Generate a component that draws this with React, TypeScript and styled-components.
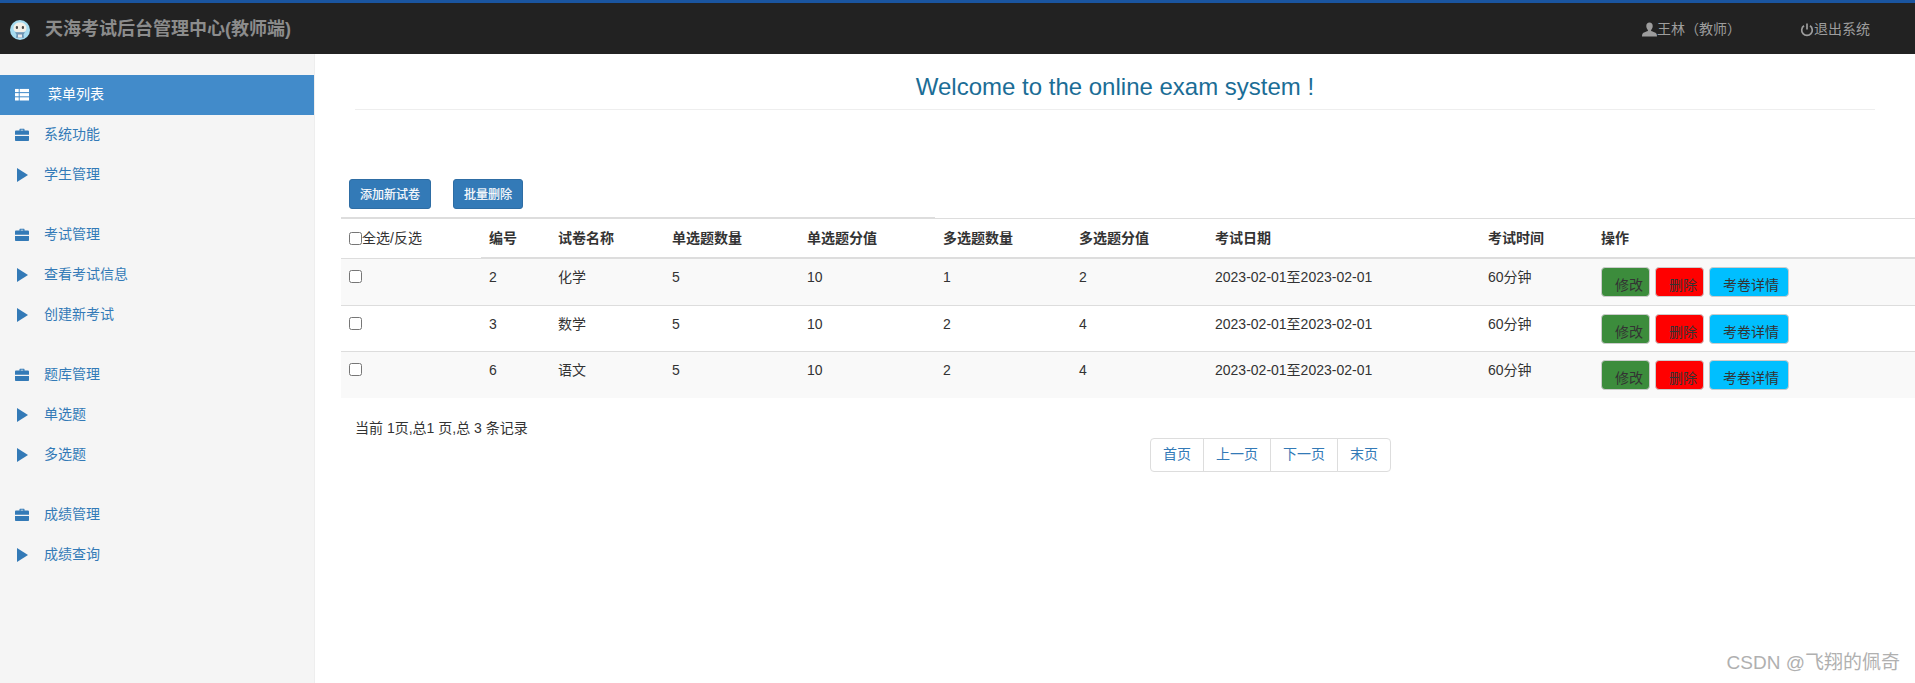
import React from "react";
import styled, { createGlobalStyle } from "styled-components";

const GlobalStyle = createGlobalStyle`
  html, body {
    margin: 0;
    padding: 0;
    height: 100%;
    overflow: hidden;
    background: #fff;
  }
  body {
    font-family: "Liberation Sans", "Noto Sans CJK SC", sans-serif;
    font-size: 14px;
    line-height: 1.42857;
    color: #333;
  }
  * {
    box-sizing: border-box;
  }
`;

const Page = styled.div`
  display: flex;
  flex-direction: column;
  height: 100vh;
  position: relative;
`;

const TopBar = styled.header`
  flex: none;
  height: 54px;
  display: flex;
  align-items: center;
  background: #222;
  border-top: 3px solid #1a55a0;
  padding: 3px 0 0 10px;
  color: #9d9d9d;
`;

const Brand = styled.div`
  flex: 1;
  display: flex;
  align-items: center;
  gap: 15px;
  font-size: 18px;
  font-weight: bold;
  color: #8c8c8c;
`;

const NavLink = styled.div<{ $width: number }>`
  width: ${(p) => p.$width}px;
  display: flex;
  align-items: center;
  color: #9d9d9d;
  font-size: 14px;
`;

const Layout = styled.div`
  flex: 1;
  display: flex;
  min-height: 0;
`;

const Sidebar = styled.aside`
  flex: none;
  width: 315px;
  background: #f5f5f5;
  border-right: 1px solid #eee;
  padding-top: 21px;
`;

const MenuGroup = styled.ul`
  list-style: none;
  margin: 0 0 20px;
  padding: 0;
`;

const MenuItem = styled.li<{ $active?: boolean }>`
  height: 40px;
  display: flex;
  align-items: center;
  padding-left: 15px;
  gap: ${(p) => (p.$active ? 20 : 16)}px;
  background: ${(p) => (p.$active ? "#428bca" : "transparent")};
  color: ${(p) => (p.$active ? "#fff" : "#337ab7")};
`;

const IconSlot = styled.span`
  flex: none;
  width: 14px;
  height: 14px;
  display: flex;
`;

const MenuText = styled.span`
  margin-left: -1px;
`;

const Main = styled.main`
  flex: 1;
  min-width: 0;
`;

const WelcomeTitle = styled.h2`
  margin: 0 40px;
  height: 56px;
  padding-top: 16px;
  border-bottom: 1px solid #eee;
  text-align: center;
  font-size: 24px;
  font-weight: normal;
  line-height: 34px;
  color: #1b6d96;
`;

const Toolbar = styled.div`
  display: flex;
  gap: 22px;
  margin: 69px 0 8px 34px;
`;

const PrimaryButton = styled.button`
  height: 30px;
  padding: 0 10px 2px;
  border: 1px solid #2e6da4;
  border-radius: 3px;
  background: #337ab7;
  color: #fff;
  font: 12px "Liberation Sans", "Noto Sans CJK SC", sans-serif;
  -webkit-text-stroke: 0.2px #fff;
`;

const ExamTable = styled.table`
  width: 1574px;
  margin-left: 26px;
  border-collapse: collapse;
  table-layout: fixed;
`;

const HeadCell = styled.th<{ $heavyTop?: boolean; $thinBottom?: boolean }>`
  height: 40px;
  padding: 2px 8px 0;
  text-align: left;
  font-weight: bold;
  border-top: ${(p) => (p.$heavyTop ? 2 : 1)}px solid #ddd;
  border-bottom: ${(p) => (p.$thinBottom ? 1 : 2)}px solid #ddd;
`;

const BodyRow = styled.tr<{ $striped: boolean }>`
  background: ${(p) => (p.$striped ? "#f9f9f9" : "#fff")};
  &:first-child td {
    padding-bottom: 8px;
  }
`;

const Cell = styled.td`
  height: 46px;
  padding: 8px 8px 7px;
  vertical-align: top;
  line-height: 20px;
  border-top: 1px solid #ddd;
`;

const Check = styled.input.attrs({ type: "checkbox" })`
  width: 13px;
  height: 13px;
  margin: 3px 0 0;
  vertical-align: top;
`;

const SelectAll = styled.label`
  display: flex;
  align-items: center;
  font-weight: normal;
  ${Check} {
    margin: 0 0 2px;
  }
`;

const Actions = styled.div`
  display: flex;
  gap: 5px;
`;

const ActionButton = styled.button<{ $bg: string; $width: number }>`
  width: ${(p) => p.$width}px;
  height: 30px;
  padding: 3px 0 0 13px;
  text-align: left;
  border: 1px solid #ccc;
  border-radius: 4px;
  background: ${(p) => p.$bg};
  color: #333;
  font: 14px "Liberation Sans", "Noto Sans CJK SC", sans-serif;
`;

const RecordInfo = styled.div`
  margin: 20px 0 0 40px;
  line-height: 20px;
`;

const PagerRow = styled.nav`
  display: flex;
  margin: 0 0 0 835px;
`;

const PagerLink = styled.a`
  height: 34px;
  padding: 6px 12px;
  margin-left: -1px;
  border: 1px solid #ddd;
  color: #337ab7;
  background: #fff;
  &:first-child {
    margin-left: 0;
    border-radius: 4px 0 0 4px;
  }
  &:last-child {
    border-radius: 0 4px 4px 0;
  }
`;

const Watermark = styled.div`
  position: absolute;
  right: 15px;
  bottom: 7px;
  font-size: 19px;
  line-height: 26px;
  color: #b0b0b0;
`;

const GridIcon = () => (
  <svg viewBox="0 0 15 14" width="15" height="14" fill="currentColor">
    <rect x="0" y="0.5" width="4" height="3.4" />
    <rect x="5" y="0.5" width="10" height="3.4" />
    <rect x="0" y="5" width="4" height="3.4" />
    <rect x="5" y="5" width="10" height="3.4" />
    <rect x="0" y="9.5" width="4" height="3.4" />
    <rect x="5" y="9.5" width="10" height="3.4" />
  </svg>
);

const BriefcaseIcon = () => (
  <svg viewBox="0 0 14 14" width="14" height="14" fill="currentColor">
    <path d="M4.500 2.600V1.200c0-.3.2-.5.5-.5h4c.3 0 .5.2.5.5v1.400h3.300c.6 0 1.200.5 1.200 1.100v3.100H0V3.700c0-.6.5-1.100 1.200-1.100zM5.700 1.700v.9h2.600v-.9z" />
    <path d="M0 8.100h14v3.800c0 .6-.5 1.100-1.100 1.100H1.100C.5 13 0 12.500 0 11.900z" />
  </svg>
);

const PlayIcon = () => (
  <svg viewBox="0 0 14 14" width="14" height="14" fill="currentColor">
    <polygon points="2,0 13,7 2,14" />
  </svg>
);

const UserIcon = () => (
  <svg viewBox="0 0 14 14" width="15" height="15" fill="#9d9d9d">
    <path d="M7 0.500c1.900 0 3 1.400 3 3.300 0 1.500-.7 2.900-1.500 3.600v1.100c1.800.6 4.300 1.400 5 2.500.3.500.5 1.500.5 2.500H0c0-1 .2-2 .5-2.500.7-1.100 3.200-1.900 5-2.500V7.400C4.700 6.700 4 5.300 4 3.800c0-1.900 1.100-3.300 3-3.300z" />
  </svg>
);

const PowerIcon = () => (
  <svg viewBox="0 0 14 14" width="14" height="14" fill="none" stroke="#9d9d9d" strokeWidth="1.700">
    <path d="M4 2.800a5.300 5.300 0 1 0 6 0" />
    <path d="M7 0.500v6" />
  </svg>
);

const LogoIcon = () => (
  <svg viewBox="0 0 20 20" width="20" height="20">
    <circle cx="10" cy="10" r="10" fill="#a6dcf0" />
    <path d="M3.500 8c0-3.500 3-5.500 6.500-5.500s6.500 2 6.500 5.500-2.500 4.500-6.500 4.500S3.500 11.500 3.500 8z" fill="#f2efe6" />
    <rect x="5.800" y="6" width="2.200" height="3" rx="1" fill="#4a4a4a" />
    <rect x="11.800" y="6" width="2.200" height="3" rx="1" fill="#4a4a4a" />
    <path d="M5 12.200h10l-1.500 2.300.5 3.200H6l.5-3.200z" fill="#6f94b3" />
    <rect x="8" y="14.500" width="4" height="3" fill="#e9e9e9" />
  </svg>
);

type MenuEntry = { label: string; icon: "case" | "play" };

const menuGroups: MenuEntry[][] = [
  [
    { label: "系统功能", icon: "case" },
    { label: "学生管理", icon: "play" },
  ],
  [
    { label: "考试管理", icon: "case" },
    { label: "查看考试信息", icon: "play" },
    { label: "创建新考试", icon: "play" },
  ],
  [
    { label: "题库管理", icon: "case" },
    { label: "单选题", icon: "play" },
    { label: "多选题", icon: "play" },
  ],
  [
    { label: "成绩管理", icon: "case" },
    { label: "成绩查询", icon: "play" },
  ],
];

const columns = [
  { title: "编号", width: 69 },
  { title: "试卷名称", width: 114 },
  { title: "单选题数量", width: 135 },
  { title: "单选题分值", width: 136 },
  { title: "多选题数量", width: 136 },
  { title: "多选题分值", width: 136 },
  { title: "考试日期", width: 273 },
  { title: "考试时间", width: 113 },
];

const exams = [
  { id: 2, name: "化学", singleCount: 5, singleScore: 10, multiCount: 1, multiScore: 2 },
  { id: 3, name: "数学", singleCount: 5, singleScore: 10, multiCount: 2, multiScore: 4 },
  { id: 6, name: "语文", singleCount: 5, singleScore: 10, multiCount: 2, multiScore: 4 },
];

export default function App() {
  return (
    <Page>
      <GlobalStyle />
      <TopBar>
        <Brand>
          <LogoIcon />
          天海考试后台管理中心(教师端)
        </Brand>
        <NavLink $width={158}>
          <UserIcon />
          王林（教师）
        </NavLink>
        <NavLink $width={115}>
          <PowerIcon />
          退出系统
        </NavLink>
      </TopBar>
      <Layout>
        <Sidebar>
          {menuGroups.map((group, i) => (
            <MenuGroup key={i}>
              {i === 0 && (
                <MenuItem $active>
                  <IconSlot>
                    <GridIcon />
                  </IconSlot>
                  <MenuText>菜单列表</MenuText>
                </MenuItem>
              )}
              {group.map((item) => (
                <MenuItem key={item.label}>
                  <IconSlot>{item.icon === "case" ? <BriefcaseIcon /> : <PlayIcon />}</IconSlot>
                  <MenuText>{item.label}</MenuText>
                </MenuItem>
              ))}
            </MenuGroup>
          ))}
        </Sidebar>
        <Main>
          <WelcomeTitle>Welcome to the online exam system !</WelcomeTitle>
          <Toolbar>
            <PrimaryButton>添加新试卷</PrimaryButton>
            <PrimaryButton>批量删除</PrimaryButton>
          </Toolbar>
          <ExamTable>
            <colgroup>
              <col style={{ width: 140 }} />
              {columns.map((c) => (
                <col key={c.title} style={{ width: c.width }} />
              ))}
              <col />
            </colgroup>
            <thead>
              <tr>
                <HeadCell $heavyTop $thinBottom>
                  <SelectAll>
                    <Check />
                    全选/反选
                  </SelectAll>
                </HeadCell>
                {columns.map((c, i) => (
                  <HeadCell key={c.title} $heavyTop={i < 4}>
                    {c.title}
                  </HeadCell>
                ))}
                <HeadCell>操作</HeadCell>
              </tr>
            </thead>
            <tbody>
              {exams.map((exam, i) => (
                <BodyRow key={exam.id} $striped={i % 2 === 0}>
                  <Cell>
                    <Check />
                  </Cell>
                  <Cell>{exam.id}</Cell>
                  <Cell>{exam.name}</Cell>
                  <Cell>{exam.singleCount}</Cell>
                  <Cell>{exam.singleScore}</Cell>
                  <Cell>{exam.multiCount}</Cell>
                  <Cell>{exam.multiScore}</Cell>
                  <Cell>2023-02-01至2023-02-01</Cell>
                  <Cell>60分钟</Cell>
                  <Cell>
                    <Actions>
                      <ActionButton $bg="#3c8c3c" $width={49}>修改</ActionButton>
                      <ActionButton $bg="#ff0000" $width={49}>删除</ActionButton>
                      <ActionButton $bg="#00bfff" $width={80}>考卷详情</ActionButton>
                    </Actions>
                  </Cell>
                </BodyRow>
              ))}
            </tbody>
          </ExamTable>
          <RecordInfo>当前 1页,总1 页,总 3 条记录</RecordInfo>
          <PagerRow>
            <PagerLink>首页</PagerLink>
            <PagerLink>上一页</PagerLink>
            <PagerLink>下一页</PagerLink>
            <PagerLink>末页</PagerLink>
          </PagerRow>
        </Main>
      </Layout>
      <Watermark>CSDN @飞翔的佩奇</Watermark>
    </Page>
  );
}
